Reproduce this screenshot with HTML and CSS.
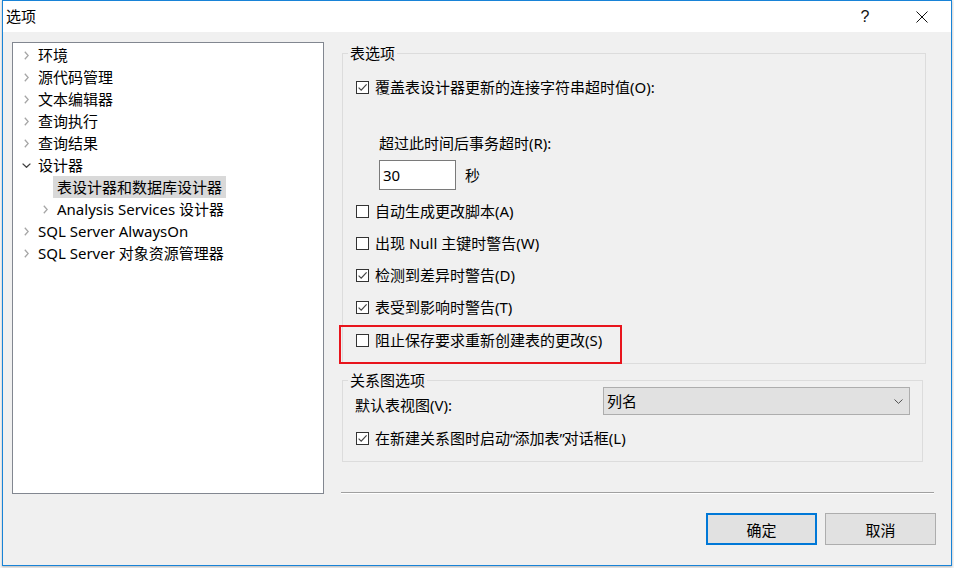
FILE: index.html
```html
<!DOCTYPE html>
<html lang="zh-CN">
<head>
<meta charset="utf-8">
<title>选项</title>
<link rel="stylesheet" href="styles.css">
</head>
<body>
<div class="screen">
  <div class="dialog">
    <div class="titlebar">
      <div class="title">选项</div>
      <div class="tb-controls">
        <div class="tb-btn help">?</div>
        <div class="tb-btn close">
          <svg width="12" height="12" viewBox="0 0 12 12"><path d="M0.5 0.5L11.5 11.5M11.5 0.5L0.5 11.5" stroke="#111" stroke-width="1" fill="none"/></svg>
        </div>
      </div>
    </div>
    <div class="body">
      <div class="left">
        <div class="tree">
          <div class="node"><span class="twisty"><svg width="5" height="9" viewBox="0 0 5 9"><path d="M0.8 0.8L4.2 4.5L0.8 8.2" class="chev-r"/></svg></span><span class="label">环境</span></div>
          <div class="node"><span class="twisty"><svg width="5" height="9" viewBox="0 0 5 9"><path d="M0.8 0.8L4.2 4.5L0.8 8.2" class="chev-r"/></svg></span><span class="label">源代码管理</span></div>
          <div class="node"><span class="twisty"><svg width="5" height="9" viewBox="0 0 5 9"><path d="M0.8 0.8L4.2 4.5L0.8 8.2" class="chev-r"/></svg></span><span class="label">文本编辑器</span></div>
          <div class="node"><span class="twisty"><svg width="5" height="9" viewBox="0 0 5 9"><path d="M0.8 0.8L4.2 4.5L0.8 8.2" class="chev-r"/></svg></span><span class="label">查询执行</span></div>
          <div class="node"><span class="twisty"><svg width="5" height="9" viewBox="0 0 5 9"><path d="M0.8 0.8L4.2 4.5L0.8 8.2" class="chev-r"/></svg></span><span class="label">查询结果</span></div>
          <div class="node"><span class="twisty"><svg width="9" height="5" viewBox="0 0 9 5"><path d="M0.6 0.6L4.5 4.3L8.4 0.6" class="chev-d"/></svg></span><span class="label">设计器</span></div>
          <div class="node level1"><span class="twisty"></span><span class="label selected">表设计器和数据库设计器</span></div>
          <div class="node level1"><span class="twisty"><svg width="5" height="9" viewBox="0 0 5 9"><path d="M0.8 0.8L4.2 4.5L0.8 8.2" class="chev-r"/></svg></span><span class="label">Analysis Services 设计器</span></div>
          <div class="node"><span class="twisty"><svg width="5" height="9" viewBox="0 0 5 9"><path d="M0.8 0.8L4.2 4.5L0.8 8.2" class="chev-r"/></svg></span><span class="label">SQL Server AlwaysOn</span></div>
          <div class="node"><span class="twisty"><svg width="5" height="9" viewBox="0 0 5 9"><path d="M0.8 0.8L4.2 4.5L0.8 8.2" class="chev-r"/></svg></span><span class="label">SQL Server 对象资源管理器</span></div>
        </div>
      </div>
      <div class="right">
        <div class="group group-table">
          <div class="legend">表选项</div>
          <div class="check-row first">
            <span class="cb"><svg width="11" height="11" viewBox="0 0 11 11"><path d="M1.6 5.6L4.2 8.2L9.6 2.4" class="tick"/></svg></span>
            <span>覆盖表设计器更新的连接字符串超时值(O):</span>
          </div>
          <div class="sub-label">超过此时间后事务超时(R):</div>
          <div class="field-row">
            <div class="num">30</div>
            <span class="unit">秒</span>
          </div>
          <div class="check-row gap">
            <span class="cb"></span>
            <span>自动生成更改脚本(A)</span>
          </div>
          <div class="check-row gap">
            <span class="cb"></span>
            <span>出现 Null 主键时警告(W)</span>
          </div>
          <div class="check-row gap">
            <span class="cb"><svg width="11" height="11" viewBox="0 0 11 11"><path d="M1.6 5.6L4.2 8.2L9.6 2.4" class="tick"/></svg></span>
            <span>检测到差异时警告(D)</span>
          </div>
          <div class="check-row gap">
            <span class="cb"><svg width="11" height="11" viewBox="0 0 11 11"><path d="M1.6 5.6L4.2 8.2L9.6 2.4" class="tick"/></svg></span>
            <span>表受到影响时警告(T)</span>
          </div>
          <div class="highlight">
            <div class="check-row">
              <span class="cb"></span>
              <span>阻止保存要求重新创建表的更改(S)</span>
            </div>
          </div>
        </div>
        <div class="group group-diagram">
          <div class="legend">关系图选项</div>
          <div class="select-row">
            <span class="select-label">默认表视图(V):</span>
            <div class="select">
              <span>列名</span>
              <svg width="9" height="5" viewBox="0 0 9 5"><path d="M0.5 0.5L4.5 4.4L8.5 0.5" class="chev-sel"/></svg>
            </div>
          </div>
          <div class="check-row gap2">
            <span class="cb"><svg width="11" height="11" viewBox="0 0 11 11"><path d="M1.6 5.6L4.2 8.2L9.6 2.4" class="tick"/></svg></span>
            <span>在新建关系图时启动<span class="q">“</span>添加表<span class="q">”</span>对话框(L)</span>
          </div>
        </div>
        <div class="separator"></div>
        <div class="buttons">
          <div class="btn default">确定</div>
          <div class="btn">取消</div>
        </div>
      </div>
    </div>
  </div>
</div>
</body>
</html>
```

FILE: styles.css
```css
html, body {
  margin: 0;
  padding: 0;
}
body {
  background: #f4f4f4;
  font-family: "Noto Sans", "Noto Sans CJK SC", sans-serif;
  font-size: 15px;
  color: #000;
}
.screen {
  width: 954px;
  height: 568px;
  overflow: hidden;
  display: flex;
}
.dialog {
  margin-left: 2px;
  width: 950px;
  height: 566px;
  box-sizing: border-box;
  border: 1px solid #1883d7;
  background: #f0f0f0;
  display: flex;
  flex-direction: column;
  box-shadow: 0 1px 2px rgba(0,0,0,0.25);
}
.titlebar {
  height: 31px;
  background: #fff;
  display: flex;
  align-items: center;
  justify-content: space-between;
  flex: none;
}
.title {
  padding-left: 3px;
  line-height: 31px;
}
.tb-controls {
  display: flex;
  gap: 11px;
  padding-right: 6px;
}
.tb-btn {
  width: 46px;
  height: 31px;
  display: flex;
  align-items: center;
  justify-content: center;
}
.help {
  font-family: "Liberation Sans", sans-serif;
  font-size: 16px;
  color: #111;
}
.body {
  flex: 1;
  display: flex;
}
.left {
  padding: 10px 0 0 9px;
}
.tree {
  width: 312px;
  height: 452px;
  box-sizing: border-box;
  border: 1px solid #828790;
  background: #fff;
  padding-top: 1px;
}
.node {
  display: flex;
  align-items: center;
  height: 22px;
  line-height: 22px;
  padding-left: 5px;
  white-space: nowrap;
}
.node.level1 {
  padding-left: 24px;
}
.twisty {
  width: 16px;
  height: 22px;
  display: flex;
  align-items: center;
  justify-content: center;
  flex: none;
}
.chev-r {
  fill: none;
  stroke: #a6a6a6;
  stroke-width: 1.3;
}
.chev-d {
  fill: none;
  stroke: #404040;
  stroke-width: 1.3;
}
.label {
  padding: 0 4px;
  height: 22px;
}
.label.selected {
  background: #d9d9d9;
}
.right {
  margin-left: 17px;
  width: 595px;
  display: flex;
  flex-direction: column;
}
.group {
  margin-left: 1px;
  box-sizing: border-box;
  border: 1px solid #dcdcdc;
}
.group-table {
  margin-top: 21px;
  width: 584px;
}
.group-diagram {
  margin-top: 16px;
  width: 581px;
  padding-bottom: 12px;
}
.legend {
  display: table;
  margin: -11px 0 0 5px;
  padding: 0 2px;
  height: 20px;
  line-height: 20px;
  background: #f0f0f0;
}
.check-row {
  display: flex;
  align-items: center;
  gap: 6px;
  height: 22px;
  line-height: 22px;
  padding-left: 13px;
  white-space: nowrap;
}
.check-row.first {
  margin-top: 13px;
}
.check-row.gap {
  margin-top: 10px;
}
.check-row.gap2 {
  margin-top: 12px;
}
.cb {
  width: 13px;
  height: 13px;
  box-sizing: border-box;
  border: 1px solid #333;
  background: #fff;
  flex: none;
  display: flex;
  align-items: center;
  justify-content: center;
}
.tick {
  fill: none;
  stroke: #444;
  stroke-width: 1.2;
}
.q {
  font-family: "Noto Sans", sans-serif;
  letter-spacing: -1px;
}
.sub-label {
  margin-top: 34px;
  padding-left: 36px;
  height: 22px;
  line-height: 22px;
}
.field-row {
  margin-top: 6px;
  padding-left: 36px;
  display: flex;
  align-items: center;
  height: 30px;
}
.num {
  width: 77px;
  height: 30px;
  box-sizing: border-box;
  border: 1px solid #7a7a7a;
  background: #fff;
  padding-left: 3px;
  line-height: 28px;
}
.unit {
  margin-left: 9px;
  line-height: 22px;
}
.highlight {
  margin: 7px 0 -1px -4px;
  width: 283px;
  box-sizing: border-box;
  border: 2px solid #e8141c;
  padding: 2px 0 11px 2px;
}
.select-row {
  margin-top: -3px;
  display: flex;
  align-items: center;
  justify-content: space-between;
  padding: 0 12px;
  height: 28px;
}
.select-label {
  margin-top: 8px;
  line-height: 22px;
}
.select {
  width: 307px;
  height: 28px;
  box-sizing: border-box;
  border: 1px solid #adadad;
  background: #e1e1e1;
  display: flex;
  align-items: center;
  justify-content: space-between;
  padding: 0 6px 0 3px;
  line-height: 26px;
}
.chev-sel {
  fill: none;
  stroke: #505050;
  stroke-width: 1;
}
.separator {
  margin-top: 30px;
  width: 593px;
  border-top: 1px solid #a0a0a0;
  border-bottom: 1px solid #fff;
}
.buttons {
  margin-top: 19px;
  display: flex;
  justify-content: flex-end;
  gap: 8px;
}
.btn {
  width: 111px;
  height: 32px;
  box-sizing: border-box;
  border: 1px solid #adadad;
  background: #e1e1e1;
  display: flex;
  align-items: center;
  justify-content: center;
}
.btn.default {
  border: 2px solid #0078d7;
}
```
